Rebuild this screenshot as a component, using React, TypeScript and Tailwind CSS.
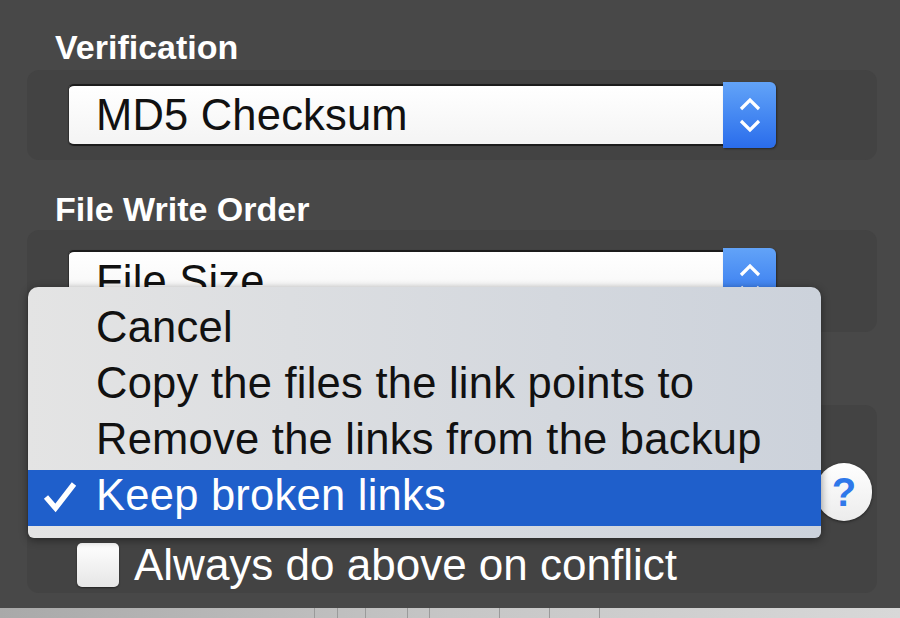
import React from "react";

function Stepper({ className = "" }: { className?: string }) {
  return (
    <div
      className={`w-[53px] h-[66px] -my-[2px] rounded-r-[6px] bg-linear-to-b from-[#62a3f8] to-[#2a6ceb] flex flex-col items-center justify-center gap-[8px] shadow-[1px_1px_2px_rgba(0,0,0,0.4)] ${className}`}
    >
      <svg width="22" height="14" viewBox="0 0 22 14">
        <path d="M2 12 L11 3 L20 12" fill="none" stroke="white" strokeWidth="3.2" />
      </svg>
      <svg width="22" height="14" viewBox="0 0 22 14">
        <path d="M2 2 L11 11 L20 2" fill="none" stroke="white" strokeWidth="3.2" />
      </svg>
    </div>
  );
}

function Select({ value }: { value: string }) {
  return (
    <div className="flex items-stretch">
      <div className="w-[654px] h-[62px] bg-linear-to-b from-white to-[#f4f4f4] border-t-[2px] border-b-[2px] border-[#1c1c1c] rounded-l-[5px] pl-[27px] flex items-center text-[43.5px] leading-[58px] tracking-[0.2px] text-[#111] shadow-[-1px_0_1px_rgba(0,0,0,0.3)]">
        {value}
      </div>
      <Stepper />
    </div>
  );
}

export default function App() {
  const font = { fontFamily: '"Liberation Sans", Arial, sans-serif' };
  return (
    <div
      className="relative w-[900px] h-[618px] overflow-hidden bg-[#484848] flex flex-col"
      style={font}
    >
      <div className="flex flex-col px-[27px] pr-[23px]">
        <div className="pl-[28px] mt-[30px] text-[34px] leading-[34px] font-bold text-white">
          Verification
        </div>
        <div className="mt-[6px] h-[90px] rounded-[12px] bg-[#434343] pl-[42px] flex items-center">
          <Select value="MD5 Checksum" />
        </div>

        <div className="pl-[28px] mt-[32px] text-[34px] leading-[34px] font-bold text-white">
          File Write Order
        </div>
        <div className="mt-[4px] h-[102px] rounded-[12px] bg-[#434343] pl-[42px] pt-[20px]">
          <Select value="File Size" />
        </div>

        <div className="mt-[73px] h-[188px] rounded-[12px] bg-[#434343] flex flex-col">
          <div className="flex justify-end pr-[5px] mt-[58px]">
            <div className="w-[56px] h-[58px] rounded-full bg-linear-to-b from-white to-[#ececec] shadow-[0_1px_3px_rgba(0,0,0,0.5)] flex items-center justify-center text-[40px] leading-none font-bold text-[#2f78ea]">
              ?
            </div>
          </div>
          <div className="flex items-center mt-[22px] pl-[50px] gap-[15px]">
            <div className="w-[42px] h-[44px] rounded-[5px] bg-linear-to-b from-white to-[#e6e6e6] shadow-[0_1px_2px_rgba(0,0,0,0.5)]" />
            <span className="text-[44px] leading-[44px] text-white">
              Always do above on conflict
            </span>
          </div>
        </div>
      </div>

      <div className="mt-auto h-[10px] flex bg-linear-to-r from-[#a9a9a9] via-[#c6c6c6] to-[#d8d8d8]">
        <div className="w-[315px] border-r border-[#9a9a9a]" />
        <div className="w-[23px] border-r border-[#9a9a9a]" />
        <div className="w-[28px] border-r border-[#9a9a9a]" />
        <div className="w-[42px] border-r border-[#9a9a9a]" />
        <div className="w-[22px] border-r border-[#9a9a9a]" />
        <div className="w-[70px] border-r border-[#9a9a9a]" />
        <div className="w-[50px] border-r border-[#9a9a9a]" />
        <div className="w-[50px] border-r border-[#9a9a9a]" />
      </div>

      {/* popup menu */}
      <div className="absolute left-[28px] top-[287px] w-[793px] h-[251px] rounded-t-[10px] rounded-b-[6px] bg-linear-to-r from-[#e4e4e4] to-[#ccd2db] shadow-[0_2px_8px_rgba(0,0,0,0.45)] pt-[15px] text-[43.5px] leading-[50px] tracking-[0.25px] text-[#111]">
        {[
          "Cancel",
          "Copy the files the link points to",
          "Remove the links from the backup",
        ].map((t) => (
          <div key={t} className="h-[56px] pl-[68px] flex items-start">
            {t}
          </div>
        ))}
        <div className="relative h-[56px] pl-[68px] bg-[#1f5fcb] text-white flex items-start">
          <svg
            className="absolute left-[15px] top-[11px]"
            width="34"
            height="32"
            viewBox="0 0 34 32"
          >
            <path
              d="M3 16 L12.5 27 L31 3"
              fill="none"
              stroke="white"
              strokeWidth="5.5"
              strokeLinejoin="miter"
            />
          </svg>
          Keep broken links
        </div>
      </div>
    </div>
  );
}
